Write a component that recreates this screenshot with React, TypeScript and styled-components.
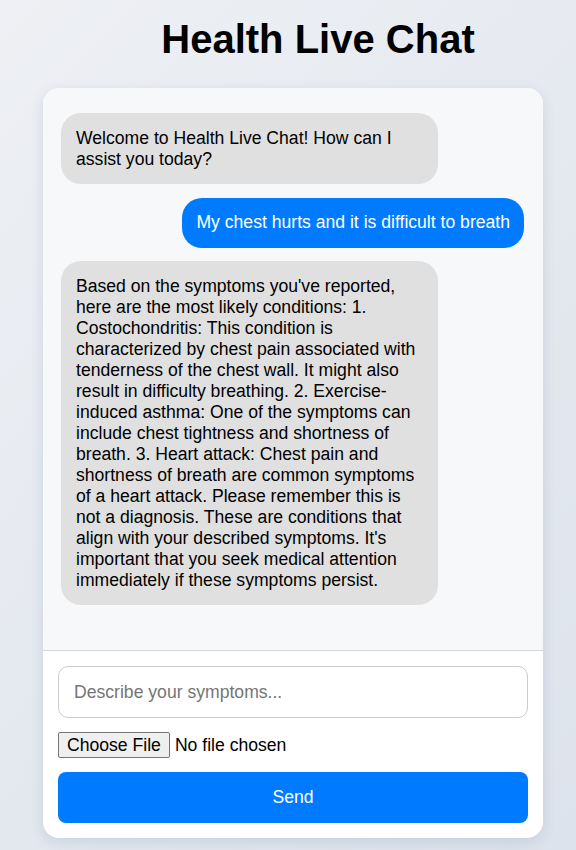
import React from "react";
import styled, { createGlobalStyle } from "styled-components";

const GlobalStyle = createGlobalStyle`
  html, body {
    margin: 0;
    padding: 0;
  }
  body {
    font-family: "Liberation Sans", Arial, sans-serif;
    background: linear-gradient(135deg, #eef0f4 0%, #e3e8ef 60%, #dde3ec 100%);
    min-height: 850px;
    color: #000;
  }
  * { box-sizing: border-box; }
`;

const Page = styled.div`
  display: flex;
  flex-direction: column;
  align-items: center;
  padding: 16px 0 0 10px;
  min-height: 850px;
`;

const Title = styled.h1`
  margin: 0 0 26px;
  padding-left: 50px;
  font-size: 40px;
  font-weight: 700;
  line-height: 46px;
  color: #000;
`;

const Card = styled.div`
  width: 500px;
  background: #fff;
  border-radius: 16px;
  box-shadow: 0 4px 14px rgba(60, 80, 110, 0.14);
  overflow: hidden;
  display: flex;
  flex-direction: column;
`;

const Messages = styled.div`
  height: 563px;
  background: #f7f8fa;
  border-bottom: 1px solid #d6d6d6;
  padding: 25px 19px 20px 18px;
  display: flex;
  flex-direction: column;
  gap: 13.5px;
  overflow-y: auto;
`;

const Bubble = styled.div<{ $user?: boolean }>`
  max-width: 377px;
  padding: ${(p) => (p.$user ? "14.5px 14px" : "14.5px 15px")};
  border-radius: 20px;
  font-size: 17.6px;
  line-height: 21px;
  align-self: ${(p) => (p.$user ? "flex-end" : "flex-start")};
  background: ${(p) => (p.$user ? "#007bff" : "#e0e0e0")};
  color: ${(p) => (p.$user ? "#fff" : "#000")};
`;

const Form = styled.div`
  padding: 15px;
  display: flex;
  flex-direction: column;
  align-items: flex-start;
`;

const TextInput = styled.input`
  width: 100%;
  height: 52px;
  padding: 15px;
  font-family: "Liberation Sans", Arial, sans-serif;
  font-size: 17.6px;
  border: 1px solid #ccc;
  border-radius: 10px;
  outline: none;
  &::placeholder { color: #757575; }
`;

const FileInput = styled.input`
  margin: 14px 0 14px;
  padding: 0;
  font-family: "Liberation Sans", Arial, sans-serif;
  font-size: 17.6px;
  line-height: 20px;
  color: #000;

  &::file-selector-button {
    font-family: "Liberation Sans", Arial, sans-serif;
    font-size: 17.6px;
    line-height: 20px;
    height: 26px;
    padding: 1px 8px;
    margin: 0 5px 0 0;
    border: 1px solid #767676;
    border-radius: 2px;
    background: #efefef;
    color: #000;
  }
`;

const SendButton = styled.button`
  width: 100%;
  height: 51px;
  border: none;
  border-radius: 8px;
  background: #007bff;
  color: #fff;
  font-family: "Liberation Sans", Arial, sans-serif;
  font-size: 17.6px;
  cursor: pointer;
`;

const botReply =
  "Based on the symptoms you've reported, here are the most likely conditions: 1. Costochondritis: This condition is characterized by chest pain associated with tenderness of the chest wall. It might also result in difficulty breathing. 2. Exercise-induced asthma: One of the symptoms can include chest tightness and shortness of breath. 3. Heart attack: Chest pain and shortness of breath are common symptoms of a heart attack. Please remember this is not a diagnosis. These are conditions that align with your described symptoms. It's important that you seek medical attention immediately if these symptoms persist.";

export default function App() {
  return (
    <>
      <GlobalStyle />
      <Page>
        <Title>Health Live Chat</Title>
        <Card>
          <Messages>
            <Bubble>Welcome to Health Live Chat! How can I assist you today?</Bubble>
            <Bubble $user>My chest hurts and it is difficult to breath</Bubble>
            <Bubble>{botReply}</Bubble>
          </Messages>
          <Form>
            <TextInput type="text" placeholder="Describe your symptoms..." />
            <FileInput type="file" />
            <SendButton type="button">Send</SendButton>
          </Form>
        </Card>
      </Page>
    </>
  );
}
